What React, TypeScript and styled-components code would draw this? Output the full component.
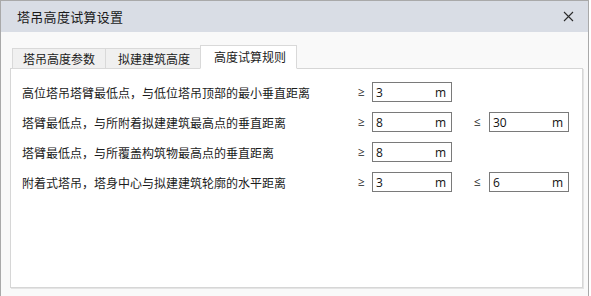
import React from 'react';
import styled, { createGlobalStyle } from 'styled-components';

const GlobalStyle = createGlobalStyle`
  html, body {
    margin: 0;
    padding: 0;
    background: #ffffff;
  }
  body {
    font-family: "Noto Sans CJK SC", "Noto Sans", sans-serif;
    color: #1b1b1b;
  }
`;

const Window = styled.div`
  width: 589px;
  height: 296px;
  box-sizing: border-box;
  border: 1px solid #a9a9a9;
  border-bottom: none;
  background: #f9f9f9;
  display: flex;
  flex-direction: column;
`;

const TitleBar = styled.div`
  height: 31px;
  flex-shrink: 0;
  background: #d9dde5;
  display: flex;
  align-items: center;
  justify-content: space-between;
  padding: 0 10px 0 16px;
`;

const Title = styled.span`
  font-size: 13px;
  color: #1a1a1a;
  letter-spacing: 0.3px;
`;

const CloseButton = styled.button`
  width: 20px;
  height: 20px;
  border: none;
  background: none;
  padding: 0;
  display: flex;
  align-items: center;
  justify-content: center;
  cursor: pointer;
`;

const Body = styled.div`
  flex: 1;
  padding: 13px 5px 8px 9px;
  display: flex;
  flex-direction: column;
`;

const TabRow = styled.div`
  display: flex;
  align-items: flex-end;
  padding-left: 2px;
  height: 24px;
  position: relative;
  z-index: 1;
  margin-bottom: -1px;
`;

const Tab = styled.div<{ $active?: boolean; $padL: number; $padR: number }>`
  height: ${p => (p.$active ? '24px' : '21px')};
  box-sizing: border-box;
  padding: 0 ${p => p.$padR}px ${p => (p.$active ? '2px' : '0')} ${p => p.$padL}px;
  display: flex;
  align-items: center;
  font-size: 12px;
  color: #1b1b1b;
  background: ${p => (p.$active ? '#ffffff' : '#f0f0f0')};
  border: 1px solid #d9d9d9;
  border-bottom-color: ${p => (p.$active ? '#ffffff' : '#d9d9d9')};
  margin-right: -1px;
`;

const Panel = styled.div`
  flex: 1;
  background: #ffffff;
  border: 1px solid #d6d6d6;
  box-shadow: 1px 1px 0 #e4e4e4;
  padding: 13px 11px;
  display: flex;
  flex-direction: column;
  gap: 10px;
`;

const Row = styled.div`
  display: grid;
  grid-template-columns: 336px 14px 80px 22px 15px 80px;
  align-items: center;
  height: 20px;
`;

const Label = styled.span`
  font-size: 12px;
  color: #1b1b1b;
  white-space: nowrap;
`;

const Sign = styled.span<{ $col: number }>`
  grid-column: ${p => p.$col};
  font-size: 12px;
  font-family: "Open Sans", "Noto Sans", sans-serif;
  color: #1b1b1b;
  line-height: 1;
`;

const Field = styled.div<{ $col: number }>`
  grid-column: ${p => p.$col};
  height: 20px;
  box-sizing: border-box;
  border: 1px solid #7a7a7a;
  background: #ffffff;
  display: flex;
  align-items: center;
  justify-content: space-between;
  padding: 0 5px 0 3px;
  font-family: "Open Sans", "Noto Sans", sans-serif;
  font-size: 12px;
  color: #111111;
`;

type Rule = { label: string; min: string; max?: string };

const rules: Rule[] = [
  { label: '高位塔吊塔臂最低点，与低位塔吊顶部的最小垂直距离', min: '3' },
  { label: '塔臂最低点，与所附着拟建建筑最高点的垂直距离', min: '8', max: '30' },
  { label: '塔臂最低点，与所覆盖构筑物最高点的垂直距离', min: '8' },
  { label: '附着式塔吊，塔身中心与拟建建筑轮廓的水平距离', min: '3', max: '6' },
];

const CloseIcon = () => (
  <svg width="11" height="11" viewBox="0 0 11 11">
    <path d="M1 1 L10 10 M10 1 L1 10" stroke="#2b2b2b" strokeWidth="1.1" fill="none" />
  </svg>
);

export default function App() {
  return (
    <>
      <GlobalStyle />
      <Window>
        <TitleBar>
          <Title>塔吊高度试算设置</Title>
          <CloseButton aria-label="关闭">
            <CloseIcon />
          </CloseButton>
        </TitleBar>
        <Body>
          <TabRow>
            <Tab $padL={10} $padR={10}>塔吊高度参数</Tab>
            <Tab $padL={12} $padR={10}>拟建建筑高度</Tab>
            <Tab $active $padL={13} $padR={10}>高度试算规则</Tab>
          </TabRow>
          <Panel>
            {rules.map(r => (
              <Row key={r.label}>
                <Label>{r.label}</Label>
                <Sign $col={2}>≥</Sign>
                <Field $col={3}>
                  <span>{r.min}</span>
                  <span>m</span>
                </Field>
                {r.max && (
                  <>
                    <Sign $col={5}>≤</Sign>
                    <Field $col={6}>
                      <span>{r.max}</span>
                      <span>m</span>
                    </Field>
                  </>
                )}
              </Row>
            ))}
          </Panel>
        </Body>
      </Window>
    </>
  );
}
